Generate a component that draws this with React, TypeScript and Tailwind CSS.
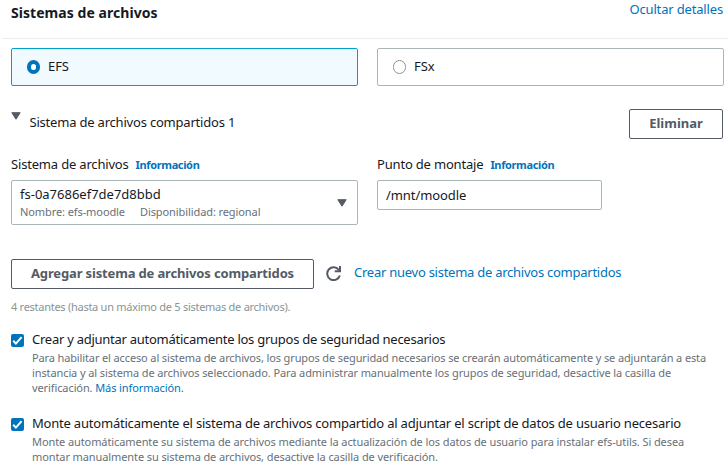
import type { ReactNode } from "react";

function Info() {
  return <a className="text-[11px] font-bold leading-[21px] tracking-[-0.36px] text-[#0073bb]">Información</a>;
}

function Triangle({ className }: { className: string }) {
  return (
    <svg viewBox="0 0 10 8" className={className} fill="#545b64" stroke="#545b64" strokeLinejoin="round">
      <path d="M.8 .7h8.4L5 7.2z" />
    </svg>
  );
}

function Check({ title, children, className }: { title: ReactNode; children: ReactNode; className: string }) {
  return (
    <div className={`flex ${className}`}>
      <span className="mt-[5px] flex size-[13px] shrink-0 items-center justify-center rounded-[2px] bg-[#0073bb]">
        <svg viewBox="0 0 13 13" className="size-[13px]" fill="none" stroke="#fff" strokeWidth="2">
          <path d="M2.2 6.8l2.7 2.8L10.6 3.2" />
        </svg>
      </span>
      <div className="ml-2 whitespace-nowrap">
        <div className="text-[13px] leading-5">{title}</div>
        <div className="mt-px text-[11px] leading-[15px] text-[#687078]">{children}</div>
      </div>
    </div>
  );
}

export default function App() {
  return (
    <div className="h-[466px] w-[728px] overflow-hidden bg-white font-['Noto_Sans',sans-serif] text-[13px] leading-5 whitespace-nowrap text-[#16191f]">
      <header className="ml-[2px] flex h-[39px] items-start justify-between border-b border-[#eaeded] pr-[5px] pl-[9px]">
        <h2 className="mt-[3px] text-sm leading-5 font-bold tracking-[0.05px]"><span>Sistemas de archivos</span></h2>
        <a className="-mt-px tracking-[-0.16px] text-[#0073bb]">Ocultar detalles</a>
      </header>

      <div className="mt-[9px] ml-[11px] flex gap-[19px]">
        <div className="flex h-[38px] w-[347px] items-center rounded-[2px] border border-[#00a1c9] bg-[#f1faff] pl-[15px]">
          <span className="h-[14px] w-[13px] rounded-full border-4 border-[#0073bb] bg-white" />
          <span className="ml-2 pb-[2px] tracking-[-0.1px]">EFS</span>
        </div>
        <div className="flex h-[38px] w-[347px] items-center rounded-[2px] border border-[#aab7b8] pl-[15px]">
          <span className="h-[14px] w-[13px] rounded-full border border-[#879596] bg-white" />
          <span className="ml-2 pb-[2px] tracking-[-0.1px]">FSx</span>
        </div>
      </div>

      <div className="mt-[23px] ml-[11px] flex h-[30px] w-[712px] items-start">
        <Triangle className="mt-[3px] h-2 w-[10px]" />
        <span className="mt-[3px] ml-[8.5px] tracking-[-0.2px]">Sistema de archivos compartidos 1</span>
        <button className="ml-auto h-[30px] w-[94px] rounded-[2px] border border-[#545b64] pb-[2px] font-bold text-[#545b64]">
          <span>Eliminar</span>
        </button>
      </div>

      <div className="mt-[15px] ml-[11px] flex gap-[19px]">
        <div className="w-[347px]">
          <div className="flex h-[26px] gap-[7px]">
            <span className="tracking-[-0.18px]">Sistema de archivos</span>
            <Info />
          </div>
          <div className="flex h-[45px] items-center justify-between rounded-[2px] border border-[#aab7b8] pr-[10px] pl-2">
            <div className="pb-[2px]">
              <div className="leading-5">fs-0a7686ef7de7d8bbd</div>
              <div className="flex gap-[15px] text-[11px] leading-[15px] tracking-[-0.09px] text-[#687078]">
                <span>Nombre: efs-moodle</span>
                <span>Disponibilidad: regional</span>
              </div>
            </div>
            <Triangle className="h-2 w-[10px]" />
          </div>
        </div>
        <div className="w-[225px]">
          <div className="flex h-[26px] gap-[7px]">
            <span className="tracking-[-0.18px]">Punto de montaje</span>
            <Info />
          </div>
          <div className="flex h-[30px] items-center rounded-[2px] border border-[#aab7b8] pb-px pl-2">
            <span className="tracking-[-0.08px]">/mnt/moodle</span>
          </div>
        </div>
      </div>

      <div className="mt-[34px] ml-[11px] flex h-[30px] items-start">
        <button className="h-[30px] w-[303px] rounded-[2px] border border-[#545b64] pb-[3px] font-bold tracking-[-0.15px] text-[#545b64]">
          <span>Agregar sistema de archivos compartidos</span>
        </button>
        <svg viewBox="0 0 16 16" className="mt-[6px] ml-[11px] size-4" fill="none" stroke="#545b64" strokeWidth="2">
          <path d="M14.8 10.4A6.4 6.4 0 1 1 14 5.2" />
          <path d="M15 1v5.2H9.7" />
        </svg>
        <a className="mt-[3px] ml-[13px] tracking-[-0.255px] text-[#0073bb]">Crear nuevo sistema de archivos compartidos</a>
      </div>

      <div className="mt-[10px] ml-[11px] text-[11px] leading-4 tracking-[-0.27px] text-[#879596]">
        <span>4 restantes (hasta un máximo de 5 sistemas de archivos).</span>
      </div>

      <Check
        className="mt-[14px] ml-[11px]"
        title={<span className="tracking-[-0.26px]">Crear y adjuntar automáticamente los grupos de seguridad necesarios</span>}
      >
        <div><span className="tracking-[-0.13px]">Para habilitar el acceso al sistema de archivos, los grupos de seguridad necesarios se crearán automáticamente y se adjuntarán a esta</span></div>
        <div><span className="tracking-[-0.105px]">instancia y al sistema de archivos seleccionado. Para administrar manualmente los grupos de seguridad, desactive la casilla de</span></div>
        <div className="tracking-[-0.1px]"><span>verificación. </span><a className="text-[#0073bb]">Más información.</a></div>
      </Check>
      <Check
        className="mt-[18px] ml-[11px]"
        title={<span className="tracking-[-0.205px]">Monte automáticamente el sistema de archivos compartido al adjuntar el script de datos de usuario necesario</span>}
      >
        <div><span className="tracking-[-0.09px]">Monte automáticamente su sistema de archivos mediante la actualización de los datos de usuario para instalar efs-utils. Si desea</span></div>
        <div><span className="tracking-[-0.1px]">montar manualmente su sistema de archivos, desactive la casilla de verificación.</span></div>
      </Check>
    </div>
  );
}
